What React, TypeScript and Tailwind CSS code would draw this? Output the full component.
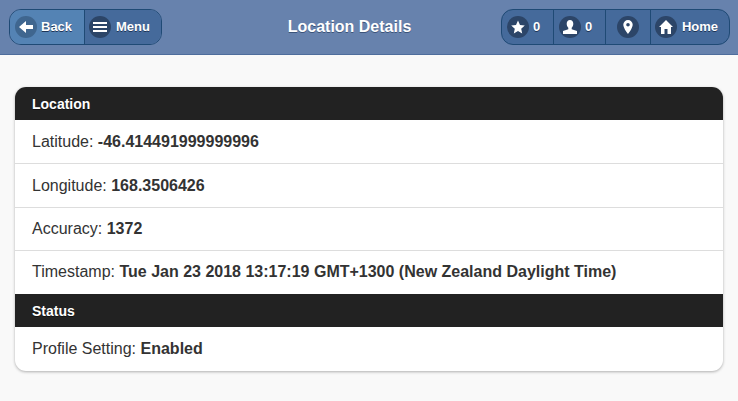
import type { ReactNode } from 'react';

function IconDot({ children, dark = true }: { children: ReactNode; dark?: boolean }) {
  return (
    <span className={`flex h-[22px] w-[22px] shrink-0 items-center justify-center rounded-full ${dark ? 'bg-[#2c4568]' : 'bg-[#3f668f]'}`}>
      <svg width="14" height="14" viewBox="0 0 14 14" fill="white">
        {children}
      </svg>
    </span>
  );
}

function Row({ label, value, height, last }: { label: string; value: string; height: string; last?: boolean }) {
  return (
    <div className={`flex items-center whitespace-pre px-[17px] text-[16px] text-[#333] ${height} ${last ? '' : 'border-b border-[#ddd]'}`}>
      {label} <b className="font-bold">{value}</b>
    </div>
  );
}

function Divider({ title }: { title: string }) {
  return (
    <div className="flex h-[33px] items-center bg-[#222] px-[17px] pt-px text-[14px] font-bold text-white [text-shadow:0_1px_0_#111]">
      {title}
    </div>
  );
}

export default function App() {
  return (
    <div className="h-[401px] w-[738px] overflow-hidden bg-[#f9f9f9] font-['Liberation_Sans',Arial,sans-serif]">
      <header className="flex h-[55px] items-center justify-between border-b border-[#4e6d9c] bg-[#6782ad] pl-[9px] pr-[8px]">
        <div className="flex h-[36px] overflow-hidden rounded-[12px] border border-[#1f4a75] text-[13px] font-bold text-white [text-shadow:0_1px_0_#1d3557]">
          <div className="flex w-[75px] items-center gap-[4px] border-r border-[#1f4a75] bg-[#5483b4] pl-[5px]">
            <IconDot dark={false}>
              <path d="M7 1v4h7v4H7v4L0 7z" />
            </IconDot>
            Back
          </div>
          <div className="flex w-[76px] items-center gap-[5px] bg-[#456a9b] pl-[4px]">
            <IconDot>
              <path d="M0 2h14v2H0zM0 6h14v2H0zM0 10h14v2H0z" />
            </IconDot>
            Menu
          </div>
        </div>

        <h1 className="pl-[36px] text-[16px] font-bold text-white [text-shadow:0_1px_0_#3b5378]">Location Details</h1>

        <div className="flex h-[36px] overflow-hidden rounded-[12px] border border-[#1f4a75] bg-[#456a9b] text-[13px] font-bold text-white [text-shadow:0_1px_0_#1d3557]">
          <div className="flex w-[52px] items-center gap-[4px] border-r border-[#1f4a75] pl-[5px]">
            <IconDot>
              <path d="M7 .5l2 4.500 4.800.5-3.600 3.200 1 4.800L7 11l-4.200 2.500 1-4.800L.2 5.500 5 5z" />
            </IconDot>
            0
          </div>
          <div className="flex w-[52px] items-center gap-[4px] border-r border-[#1f4a75] pl-[5px]">
            <IconDot>
              <path d="M7 0c2 0 3.300 1.600 3.300 3.800 0 1.700-.7 3.200-1.600 4v1.400L14 11v3H0v-3l5.300-1.800V7.800c-.9-.8-1.600-2.300-1.600-4C3.700 1.600 5 0 7 0z" />
            </IconDot>
            0
          </div>
          <div className="flex w-[45px] items-center justify-center border-r border-[#1f4a75]">
            <IconDot>
              <path fillRule="evenodd" d="M7 0a4.700 4.700 0 0 1 4.700 4.700C11.700 8 7 14 7 14S2.300 8 2.300 4.700A4.700 4.700 0 0 1 7 0zm0 3a1.800 1.800 0 1 0 0 3.600A1.800 1.800 0 0 0 7 3z" />
            </IconDot>
          </div>
          <div className="flex w-[78px] items-center gap-[5px] pl-[4px]">
            <IconDot>
              <path d="M7 0l7 7h-2v7H8.500V9h-3v5H2V7H0z" />
            </IconDot>
            Home
          </div>
        </div>
      </header>

      <main className="px-[15px] pt-[32px]">
        <div className="overflow-hidden rounded-[11px] bg-white shadow-[0_1px_3px_rgba(0,0,0,0.3)]">
          <Divider title="Location" />
          <Row label="Latitude:" value="-46.414491999999996" height="h-[44px]" />
          <Row label="Longitude:" value="168.3506426" height="h-[44px]" />
          <Row label="Accuracy:" value="1372" height="h-[43px]" />
          <Row label="Timestamp:" value="Tue Jan 23 2018 13:17:19 GMT+1300 (New Zealand Daylight Time)" height="h-[43px] pb-px" last />
          <Divider title="Status" />
          <Row label="Profile Setting:" value="Enabled" height="h-[44px]" last />
        </div>
      </main>
    </div>
  );
}
